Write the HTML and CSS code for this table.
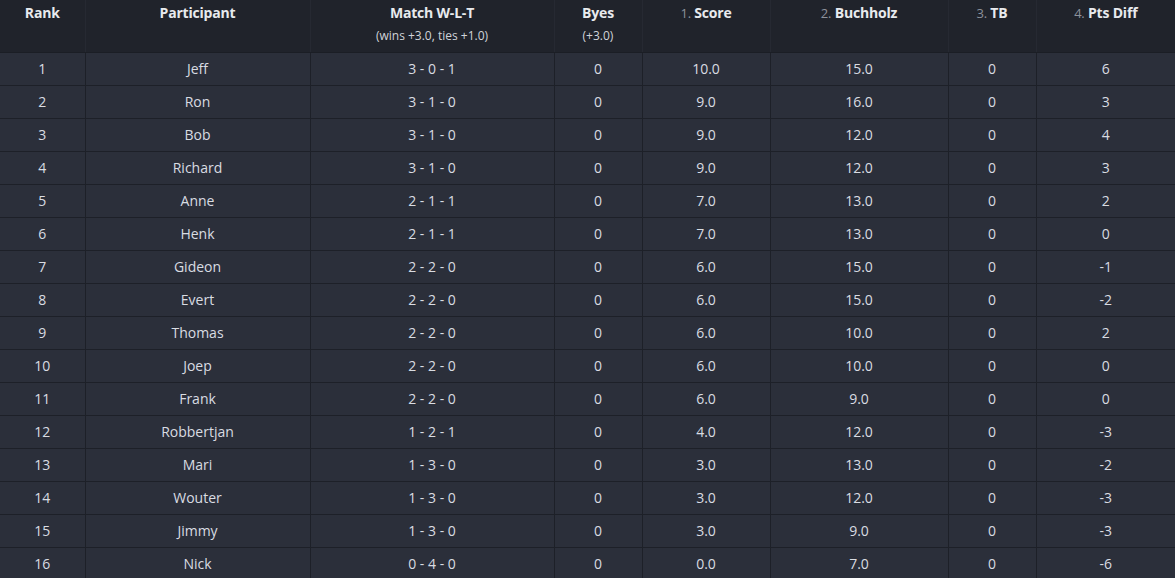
FILE: index.html
```html
<!DOCTYPE html>
<html>
<head>
<meta charset="utf-8">
<link rel="stylesheet" href="styles.css">
</head>
<body>
<table class="standings">
  <colgroup>
    <col class="c-rank"><col class="c-part"><col class="c-match"><col class="c-byes"><col class="c-score"><col class="c-buch"><col class="c-tb"><col class="c-diff">
  </colgroup>
  <thead>
    <tr>
      <th><span class="lbl">Rank</span></th>
      <th><span class="lbl">Participant</span></th>
      <th><span class="lbl">Match W-L-T</span><span class="sub">(wins +3.0, ties +1.0)</span></th>
      <th><span class="lbl">Byes</span><span class="sub">(+3.0)</span></th>
      <th><span class="lbl"><span class="num">1.</span> Score</span></th>
      <th><span class="lbl"><span class="num">2.</span> Buchholz</span></th>
      <th><span class="lbl"><span class="num">3.</span> TB</span></th>
      <th><span class="lbl"><span class="num">4.</span> Pts Diff</span></th>
    </tr>
  </thead>
  <tbody>
    <tr><td>1</td><td>Jeff</td><td>3 - 0 - 1</td><td>0</td><td>10.0</td><td>15.0</td><td>0</td><td>6</td></tr>
    <tr><td>2</td><td>Ron</td><td>3 - 1 - 0</td><td>0</td><td>9.0</td><td>16.0</td><td>0</td><td>3</td></tr>
    <tr><td>3</td><td>Bob</td><td>3 - 1 - 0</td><td>0</td><td>9.0</td><td>12.0</td><td>0</td><td>4</td></tr>
    <tr><td>4</td><td>Richard</td><td>3 - 1 - 0</td><td>0</td><td>9.0</td><td>12.0</td><td>0</td><td>3</td></tr>
    <tr><td>5</td><td>Anne</td><td>2 - 1 - 1</td><td>0</td><td>7.0</td><td>13.0</td><td>0</td><td>2</td></tr>
    <tr><td>6</td><td>Henk</td><td>2 - 1 - 1</td><td>0</td><td>7.0</td><td>13.0</td><td>0</td><td>0</td></tr>
    <tr><td>7</td><td>Gideon</td><td>2 - 2 - 0</td><td>0</td><td>6.0</td><td>15.0</td><td>0</td><td>-1</td></tr>
    <tr><td>8</td><td>Evert</td><td>2 - 2 - 0</td><td>0</td><td>6.0</td><td>15.0</td><td>0</td><td>-2</td></tr>
    <tr><td>9</td><td>Thomas</td><td>2 - 2 - 0</td><td>0</td><td>6.0</td><td>10.0</td><td>0</td><td>2</td></tr>
    <tr><td>10</td><td>Joep</td><td>2 - 2 - 0</td><td>0</td><td>6.0</td><td>10.0</td><td>0</td><td>0</td></tr>
    <tr><td>11</td><td>Frank</td><td>2 - 2 - 0</td><td>0</td><td>6.0</td><td>9.0</td><td>0</td><td>0</td></tr>
    <tr><td>12</td><td>Robbertjan</td><td>1 - 2 - 1</td><td>0</td><td>4.0</td><td>12.0</td><td>0</td><td>-3</td></tr>
    <tr><td>13</td><td>Mari</td><td>1 - 3 - 0</td><td>0</td><td>3.0</td><td>13.0</td><td>0</td><td>-2</td></tr>
    <tr><td>14</td><td>Wouter</td><td>1 - 3 - 0</td><td>0</td><td>3.0</td><td>12.0</td><td>0</td><td>-3</td></tr>
    <tr><td>15</td><td>Jimmy</td><td>1 - 3 - 0</td><td>0</td><td>3.0</td><td>9.0</td><td>0</td><td>-3</td></tr>
    <tr><td>16</td><td>Nick</td><td>0 - 4 - 0</td><td>0</td><td>0.0</td><td>7.0</td><td>0</td><td>-6</td></tr>
  </tbody>
</table>
</body>
</html>
```

FILE: styles.css
```css
html, body {
  margin: 0;
  padding: 0;
  background: #2b2f3a;
  overflow: hidden;
}

body {
  font-family: "Open Sans", "Noto Sans", sans-serif;
  color: #d9dce2;
  font-size: 14px;
}

.standings {
  width: 1175px;
  border-collapse: collapse;
  table-layout: fixed;
}

.c-rank { width: 85px; }
.c-part { width: 225px; }
.c-match { width: 244px; }
.c-byes { width: 88px; }
.c-score { width: 128px; }
.c-buch { width: 178px; }
.c-tb { width: 88px; }
.c-diff { width: 139px; }

.standings th {
  background: #20232b;
  height: 52px;
  padding: 0;
  vertical-align: top;
  text-align: center;
  font-weight: 400;
  border-right: 1px solid #262932;
  border-bottom: 1px solid #1b1e25;
}

.standings th:last-child { border-right: none; }

.lbl {
  display: block;
  font-weight: 700;
  font-size: 14px;
  line-height: 18px;
  padding-top: 4px;
  color: #e8eaee;
  letter-spacing: -0.2px;
}

.num {
  color: #8c919b;
  font-weight: 400;
  font-size: 13px;
}

.sub {
  display: block;
  font-weight: 400;
  font-size: 12px;
  line-height: 14px;
  padding-top: 7px;
  color: #d0d3d9;
}

.standings td {
  height: 32px;
  padding: 0;
  text-align: center;
  vertical-align: middle;
  line-height: 18px;
  background: #2b2f3a;
  border-right: 1px solid #1d2028;
  border-bottom: 1px solid #1d2028;
}

.standings td:last-child { border-right: none; }
```
